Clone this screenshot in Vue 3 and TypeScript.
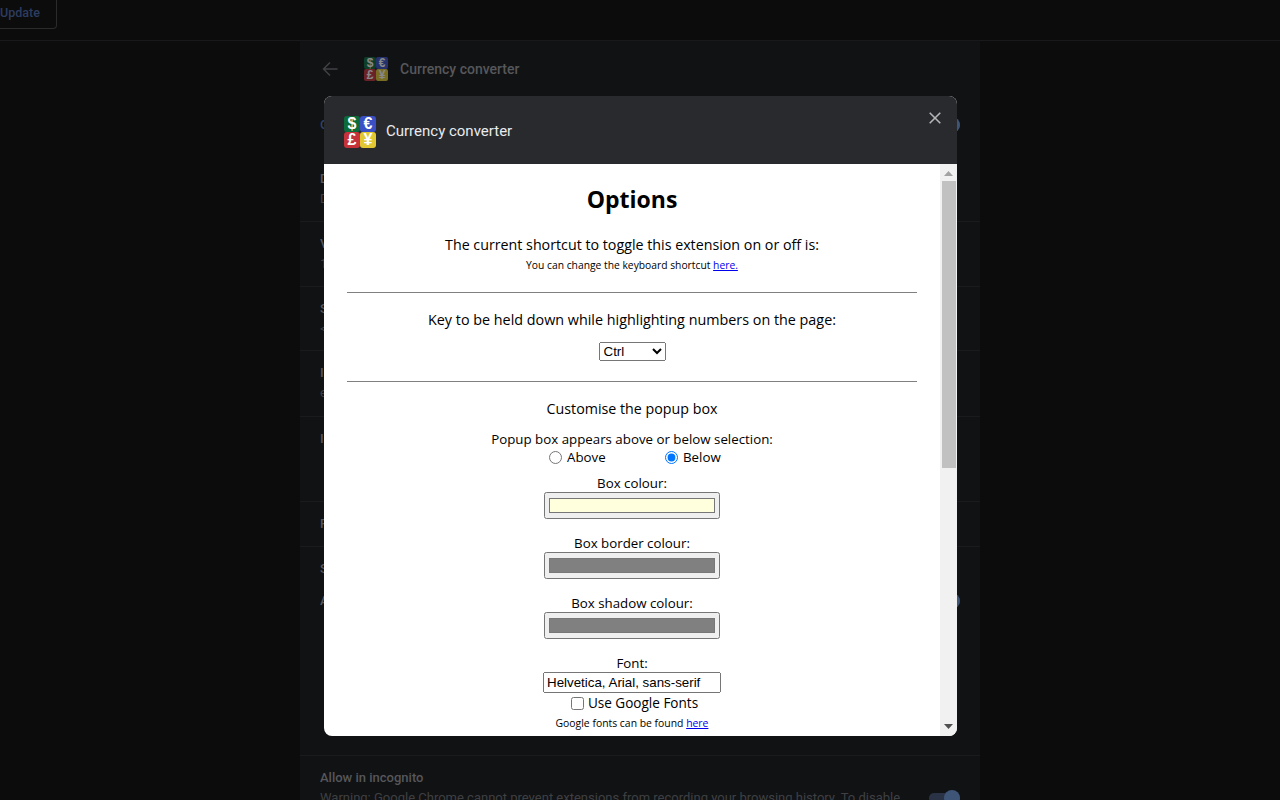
<script setup lang="ts">
const rows = [
  { title: 'Description', sub: 'Designed to convert currencies on any page.', h: 68 },
  { title: 'Version', sub: '1.4.2', h: 65 },
  { title: 'Size', sub: '< 1 MB', h: 64 },
  { title: 'ID', sub: 'ekfnpkdcbjmhkofapdbmgbkcjhpmcnld', h: 66 },
  { title: 'Inspect views', sub: '', h: 85 },
  { title: 'Permissions', sub: '', h: 45 },
]
const tiles = [
  { c: 'green', g: '$' },
  { c: 'blue', g: '€' },
  { c: 'red', g: '£' },
  { c: 'yellow', g: '¥' },
]
const colours = [
  { label: 'Box colour:', value: '#ffffdd' },
  { label: 'Box border colour:', value: '#808080' },
  { label: 'Box shadow colour:', value: '#808080' },
]
</script>

<template>
  <div class="root">
    <header class="toolbar">
      <button class="update">Update</button>
    </header>

    <main class="card">
      <div class="head">
        <svg class="back" width="16" height="16" viewBox="0 0 16 16" fill="none" stroke="#414245" stroke-width="1.4">
          <path d="M15.5 8H1.5M8 1.5 1.5 8 8 14.5" />
        </svg>
        <div class="logo small">
          <span v-for="t in tiles" :key="t.c" :class="t.c">{{ t.g }}</span>
        </div>
        <span class="head-title">Currency converter</span>
      </div>

      <div class="on-row">
        <span class="on">On</span>
        <span class="toggle" />
      </div>

      <section v-for="r in rows" :key="r.title" class="row" :style="{ height: r.h + 'px' }">
        <div class="row-title">{{ r.title }}</div>
        <div class="row-sub">{{ r.sub }}</div>
      </section>

      <section class="site">
        <div class="row-title">Site access</div>
        <div class="site-line">
          <span class="row-title">Allow this extension to read and change all your data</span>
          <span class="toggle" />
        </div>
      </section>

      <section class="incognito">
        <div class="inc-text">
          <div class="row-title">Allow in incognito</div>
          <div class="row-sub">Warning: Google Chrome cannot prevent extensions from recording your browsing history. To disable</div>
        </div>
        <span class="toggle" />
      </section>
    </main>

    <div class="dialog">
      <div class="dlg-head">
        <div class="logo">
          <span v-for="t in tiles" :key="t.c" :class="t.c">{{ t.g }}</span>
        </div>
        <span class="dlg-title">Currency converter</span>
        <svg class="close" width="12" height="12" viewBox="0 0 12 12" stroke="#b4b5b7" stroke-width="1.6">
          <path d="M.7.7l10.6 10.6M11.3.7.7 11.3" />
        </svg>
      </div>

      <div class="dlg-body">
        <div class="content">
          <h1>Options</h1>
          <p class="lead">The current shortcut to toggle this extension on or off is:</p>
          <p class="small-text">You can change the keyboard shortcut <a>here.</a></p>
          <hr class="rule-one" />
          <p class="lead key">Key to be held down while highlighting numbers on the page:</p>
          <select class="key-select"><option>Ctrl</option></select>
          <hr class="rule-two" />
          <p class="lead custom">Customise the popup box</p>
          <p class="label position">Popup box appears above or below selection:</p>
          <div class="radios">
            <label class="first"><input type="radio" name="pos" />Above</label>
            <label><input type="radio" name="pos" checked />Below</label>
          </div>
          <div v-for="c in colours" :key="c.label" class="colour">
            <p class="label">{{ c.label }}</p>
            <input type="color" :value="c.value" />
          </div>
          <p class="label font-label">Font:</p>
          <input class="font-input" type="text" value="Helvetica, Arial, sans-serif" />
          <label class="google"><input type="checkbox" />Use Google Fonts</label>
          <p class="small-text found">Google fonts can be found <a>here</a></p>
        </div>

        <div class="scrollbar">
          <svg width="9" height="5" viewBox="0 0 9 5"><path d="M4.5 0 9 5H0z" fill="#a3a3a3" /></svg>
          <div class="thumb" />
          <svg class="down" width="9" height="5" viewBox="0 0 9 5"><path d="M0 0h9L4.5 5z" fill="#505050" /></svg>
        </div>
      </div>
    </div>
  </div>
</template>

<style>
html, body { margin: 0; background: #0c0c0d; }
</style>

<style scoped>
.root {
  position: relative;
  height: 800px;
  overflow: hidden;
  background: #0c0c0d;
  font-family: Roboto, "Liberation Sans", sans-serif;
}
.toolbar {
  height: 41px;
  box-sizing: border-box;
  border-bottom: 1px solid #19191b;
}
.update {
  display: block;
  width: 74px;
  height: 29px;
  margin: 0 0 0 -17px;
  padding: 0 0 4px 16px;
  box-sizing: border-box;
  text-align: left;
  background: none;
  border: 1px solid #2a2b2d;
  border-top: 0;
  border-radius: 0 0 4px 4px;
  color: #2c3d60;
  font: 500 12.5px Roboto, sans-serif;
}
.card {
  width: 680px;
  margin: 0 auto;
  background: #111214;
  height: 759px;
}
.head {
  height: 57px;
  box-sizing: border-box;
  padding: 0 0 2px 22px;
  display: flex;
  align-items: center;
}
.back { margin-right: 26px; }
.head-title {
  margin-left: 12px;
  font-size: 14px;
  font-weight: 500;
  color: #56575a;
}
.on-row {
  height: 56px;
  box-sizing: border-box;
  padding: 0 20px 4px;
  display: flex;
  align-items: center;
  justify-content: space-between;
}
.on { color: #2f4268; font-size: 13px; font-weight: 500; }
.on-row .toggle { margin-top: 2px; }
.toggle {
  position: relative;
  display: block;
  width: 31px;
  height: 10px;
  border-radius: 5px;
  background: #2a3346;
}
.toggle::after {
  content: "";
  position: absolute;
  right: 0;
  top: -3px;
  width: 16px;
  height: 16px;
  border-radius: 50%;
  background: #3e5578;
}
.row {
  box-sizing: border-box;
  padding: 14px 20px 0;
  border-bottom: 1px solid #1a1b1d;
}
.on-row + .row { padding-top: 17px; }
.row-title { color: #56575a; font-size: 13px; font-weight: 500; line-height: 16px; }
.row-sub { color: #3f4043; font-size: 13px; line-height: 16px; margin-top: 4px; }
.site {
  height: 209px;
  box-sizing: border-box;
  padding: 14px 20px 0;
  border-bottom: 1px solid #1a1b1d;
}
.site-line {
  margin-top: 16px;
  display: flex;
  align-items: center;
  justify-content: space-between;
}
.incognito {
  padding: 14px 20px 0;
  display: flex;
  justify-content: space-between;
}
.incognito .row-sub { margin-top: 4px; white-space: nowrap; }
.incognito .toggle { margin-top: 23px; }

.logo {
  display: grid;
  grid-template-columns: 16px 16px;
  grid-template-rows: 16px 16px;
  width: 32px;
  height: 32px;
  flex: none;
}
.logo span {
  display: flex;
  align-items: center;
  justify-content: center;
  overflow: hidden;
  color: #fff;
  font: 700 16px/1 "Liberation Sans", sans-serif;
  border-radius: 3px;
}
.green { background: #0b6b3a; }
.blue { background: #3a50c4; }
.red { background: #c5323a; }
.yellow { background: #e1c832; }
.logo.small {
  grid-template-columns: 12px 12px;
  grid-template-rows: 12px 12px;
  width: 24px;
  height: 24px;
  opacity: .5;
}
.logo.small span { font-size: 12px; border-radius: 2px; }

.dialog {
  position: absolute;
  left: 324px;
  top: 96px;
  width: 633px;
  height: 640px;
  border-radius: 8px;
  overflow: hidden;
  display: flex;
  flex-direction: column;
  background: #fff;
}
.dlg-head {
  position: relative;
  height: 68px;
  flex: none;
  display: flex;
  align-items: center;
  padding: 4px 0 0 20px;
  box-sizing: border-box;
  background: #292a2d;
}
.dlg-title {
  margin: -2px 0 0 10px;
  color: #e8eaed;
  font-size: 15px;
  font-weight: 400;
  font-family: Roboto, sans-serif;
}
.close { position: absolute; right: 16px; top: 16px; }
.dlg-body {
  flex: 1;
  min-height: 0;
  display: flex;
}
.content {
  flex: 1;
  min-width: 0;
  overflow: hidden;
  box-sizing: border-box;
  padding: 0 23px;
  display: flex;
  flex-direction: column;
  align-items: center;
  text-align: center;
  color: #000;
  font-family: "Open Sans", "Noto Sans", sans-serif;
}
.content p { margin: 0; }
h1 {
  margin: 20px 0 0;
  font: 700 23px/31px "Open Sans", sans-serif;
}
.lead { font-size: 14.25px; line-height: 20px; }
.content > .lead:first-of-type { margin-top: 20px; }
.small-text { font-size: 10.3px; line-height: 14px; margin-top: 3px !important; }
a { color: #00e; text-decoration: underline; }
hr {
  width: 100%;
  height: 1px;
  margin: 0;
  border: 0;
  background: #808080;
  flex: none;
}
.rule-one { margin-top: 20px; }
.key { margin-top: 17px !important; font-size: 14.35px; }
.key-select {
  margin-top: 12px;
  width: 67px;
  height: 19px;
  font: 13.33px "Liberation Sans", sans-serif;
}
.rule-two { margin-top: 20px; }
.custom { margin-top: 17px !important; }
.label { font-size: 13.3px; line-height: 16px; }
.position { margin-top: 12px !important; }
.radios {
  display: flex;
  font-size: 13.3px;
  line-height: 16px;
  margin: 2px 0 0 5px;
  width: 171px;
  white-space: nowrap;
}
.radios label { display: flex; align-items: center; gap: 5px; flex: none; }
.radios .first { width: 116px; }
.radios input { margin: 0; width: 13px; height: 13px; }
.colour {
  display: flex;
  flex-direction: column;
  align-items: center;
  margin-top: 10px;
}
.colour + .colour { margin-top: 16px; }
.colour input {
  display: block;
  width: 176px;
  height: 27px;
  margin-top: 1px;
}
.font-label { margin-top: 16px !important; }
.font-input {
  width: 178px;
  height: 21px;
  box-sizing: border-box;
  margin-top: 1px;
  font: 13.33px "Liberation Sans", sans-serif;
  flex: none;
}
.google {
  display: flex;
  align-items: center;
  gap: 4px;
  font-size: 13.55px;
  line-height: 16px;
  margin: 2px 0 0 5px;
}
.google input { margin: 0; width: 13px; height: 13px; }
.found { margin-top: 5px !important; font-size: 10.4px; }
.scrollbar {
  width: 17px;
  flex: none;
  background: #f1f1f1;
  display: flex;
  flex-direction: column;
  align-items: center;
  padding-top: 7px;
  box-sizing: border-box;
}
.thumb {
  width: 14px;
  height: 287px;
  margin-top: 5px;
  background: #c1c1c1;
}
.down { margin-top: auto; margin-bottom: 7px; }
</style>
